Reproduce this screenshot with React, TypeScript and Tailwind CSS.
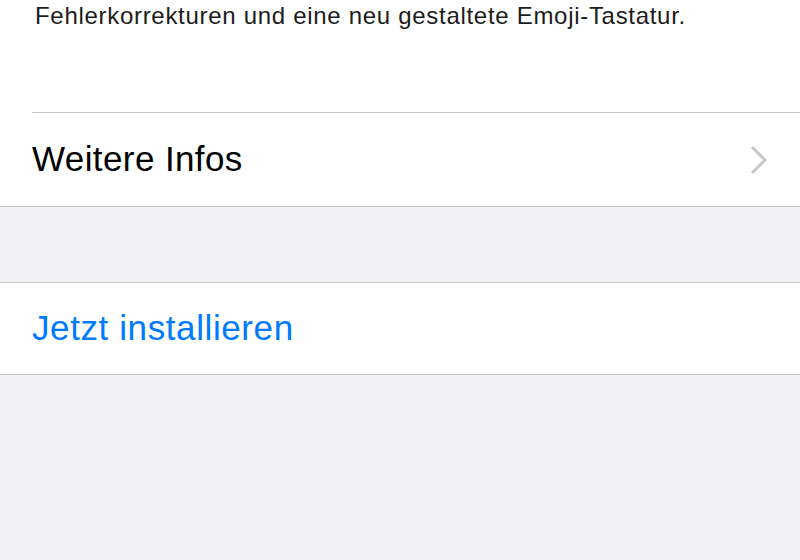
export default function App() {
  return (
    <div
      className="w-[800px] h-[560px] overflow-hidden bg-[#efeff4]"
      style={{ fontFamily: '"Liberation Sans", Arial, sans-serif' }}
    >
      <div className="bg-white border-b border-[#c8c7cc]">
        <div className="pl-[35px] pr-4 pt-[1px] h-[112px]">
          <p className="text-[24px] leading-[30px] tracking-[0.7px] text-[#1c1c1c]">
            Fehlerkorrekturen und eine neu gestaltete Emoji-Tastatur.
          </p>
        </div>
        <div className="ml-[32px] border-t border-[#c8c7cc] h-[94px] flex items-center justify-between pr-[32px]">
          <span className="text-[35px] tracking-[0.4px] text-black">Weitere Infos</span>
          <svg width="18" height="30" viewBox="0 0 18 30" fill="none">
            <path d="M2 2 L15 15 L2 28" stroke="#c7c7cc" strokeWidth="3" />
          </svg>
        </div>
      </div>
      <div className="h-[75px]" />
      <div className="bg-white border-y border-[#c8c7cc] h-[93px] flex items-center pl-[32px]">
        <span className="text-[35px] tracking-[0.6px] text-[#007aff]">Jetzt installieren</span>
      </div>
    </div>
  );
}
